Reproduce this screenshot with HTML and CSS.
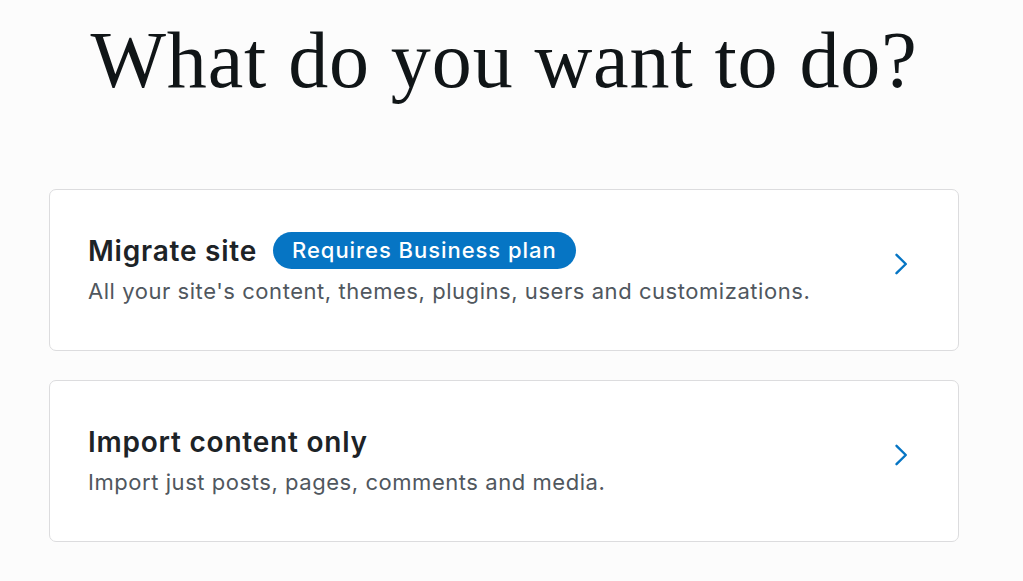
FILE: index.html
```html
<!DOCTYPE html>
<html>
<head>
<meta charset="utf-8">
<link rel="stylesheet" href="styles.css">
</head>
<body>
<main class="page">
  <h1 class="title">What do you want to do?</h1>
  <div class="options">
    <a class="card" href="#">
      <div class="card-text">
        <div class="card-head">
          <span class="card-title">Migrate site</span>
          <span class="badge">Requires Business plan</span>
        </div>
        <div class="card-desc">All your site's content, themes, plugins, users and customizations.</div>
      </div>
      <svg class="chev" width="24" height="24" viewBox="0 0 24 24"><path d="M8.5 2.8 L17.8 12 L8.5 21.2" fill="none" stroke="#0675c4" stroke-width="2.4" stroke-linecap="round" stroke-linejoin="round"/></svg>
    </a>
    <a class="card" href="#">
      <div class="card-text">
        <div class="card-head">
          <span class="card-title">Import content only</span>
        </div>
        <div class="card-desc">Import just posts, pages, comments and media.</div>
      </div>
      <svg class="chev" width="24" height="24" viewBox="0 0 24 24"><path d="M8.5 2.8 L17.8 12 L8.5 21.2" fill="none" stroke="#0675c4" stroke-width="2.4" stroke-linecap="round" stroke-linejoin="round"/></svg>
    </a>
  </div>
</main>
</body>
</html>
```
FILE: styles.css
```css
html, body {
  margin: 0;
  padding: 0;
  background: #fcfcfc;
}
body {
  font-family: Inter, "Noto Sans", sans-serif;
  color: #1d2327;
}
.page {
  width: 910px;
  margin-left: 49px;
  display: flex;
  flex-direction: column;
}
.title {
  margin: 12px 0 0;
  font-family: "Liberation Serif", "DejaVu Serif", serif;
  font-weight: 400;
  font-size: 80px;
  line-height: 96px;
  text-align: center;
  color: #101517;
  letter-spacing: 0.9px;
}
.options {
  margin-top: 81px;
  display: flex;
  flex-direction: column;
  gap: 29px;
}
.card {
  display: flex;
  align-items: center;
  justify-content: space-between;
  height: 162px;
  box-sizing: border-box;
  padding: 0 46px 0 38px;
  background: #fff;
  border: 1px solid #dcdcde;
  border-radius: 7px;
  text-decoration: none;
  color: inherit;
}
.card-text {
  display: flex;
  flex-direction: column;
  gap: 5px;
  padding-bottom: 2px;
}
.card-head {
  display: flex;
  align-items: center;
  gap: 16px;
}
.card-title {
  font-size: 28px;
  font-weight: 600;
  letter-spacing: 0.78px;
  color: #1d2327;
  line-height: 38px;
}
.badge {
  background: #0675c4;
  color: #fff;
  font-size: 22px;
  font-weight: 500;
  letter-spacing: 0.95px;
  line-height: 37px;
  padding: 0 19px;
  border-radius: 19px;
}
.card-desc {
  font-size: 22px;
  letter-spacing: 0.55px;
  color: #50575e;
  line-height: 32px;
}
.chev {
  flex: none;
  margin-bottom: 13px;
}
```
